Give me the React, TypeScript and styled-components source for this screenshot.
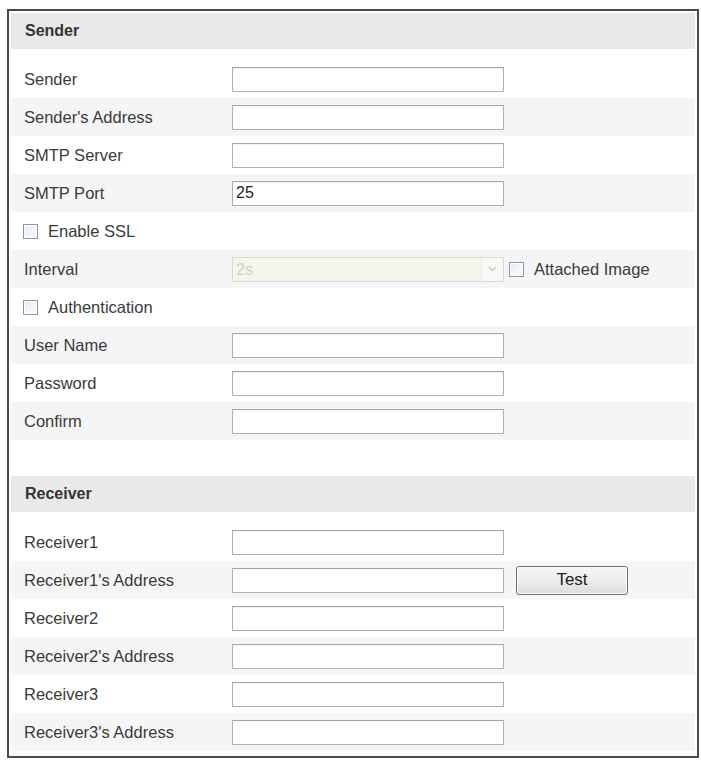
import styled, { createGlobalStyle } from "styled-components";

const Global = createGlobalStyle`
	body {
		margin: 0;
		background: #fff;
		font-family: "Liberation Sans", Arial, sans-serif;
	}
`;

const Panel = styled.div`
	box-sizing: border-box;
	width: 692px;
	margin: 9px 0 0 7px;
	padding: 2px 2px 5px;
	border: 2px solid #4a4a4a;
	background: #fff;
`;

const Section = styled.section<{ $gap?: number }>`
	margin-top: ${(p) => p.$gap ?? 0}px;
`;

const Header = styled.div`
	height: 36px;
	display: flex;
	align-items: center;
	padding-left: 14px;
	background: #e9e9e9;
	color: #333;
	font-size: 16px;
	font-weight: bold;
`;

const Rows = styled.div`
	padding-top: 11px;
`;

const Row = styled.div`
	height: 38px;
	display: grid;
	grid-template-columns: 208px auto;
	align-items: center;
	padding-left: 13px;
	&:nth-child(even) {
		background: #f5f5f5;
	}
`;

const Label = styled.span`
	color: #3a3a3a;
	font-size: 16.5px;
`;

const Controls = styled.div`
	display: flex;
	align-items: center;
`;

const TextBox = styled.input`
	box-sizing: border-box;
	width: 272px;
	height: 25px;
	margin: 0;
	padding: 0 3px;
	border: 1px solid #aab2bc;
	border-top-color: #9ea6b0;
	box-shadow: inset 0 1px 1px rgba(0, 0, 0, 0.06);
	background: #fff;
	color: #222;
	font-family: inherit;
	font-size: 16px;
	outline: none;
`;

const SelectWrap = styled.div`
	position: relative;
	box-sizing: border-box;
	width: 272px;
	height: 25px;
	border: 1px solid #d9d9cf;
	background: #f5f5ec;
`;

const Select = styled.select`
	appearance: none;
	width: 100%;
	height: 100%;
	margin: 0;
	padding: 0 3px;
	border: none;
	background: transparent;
	color: #c4c4bc;
	font-family: inherit;
	font-size: 16px;
`;

const Arrow = styled.span`
	position: absolute;
	top: 0;
	right: 0;
	width: 21px;
	height: 100%;
	display: flex;
	align-items: center;
	justify-content: center;
	background: #f8f8f6;
	border-left: 1px solid #ecece6;
	pointer-events: none;
`;

const Check = styled.span<{ $gap?: number }>`
	box-sizing: border-box;
	width: 15px;
	height: 15px;
	margin-left: ${(p) => p.$gap ?? 0}px;
	border: 1px solid #8798ad;
	background: linear-gradient(135deg, #e6eaf0, #fbfcfd);
	box-shadow: inset 0 0 0 1px #fff;
	flex-shrink: 0;
`;

const CheckRow = styled.label`
	height: 38px;
	display: flex;
	align-items: center;
	padding-left: 12px;
	&:nth-child(even) {
		background: #f5f5f5;
	}
`;

const CheckText = styled.span`
	margin-left: 10px;
	color: #3a3a3a;
	font-size: 16.5px;
`;

const Button = styled.button`
	box-sizing: border-box;
	width: 112px;
	height: 29px;
	margin-left: 12px;
	border: 1px solid #6f6f6f;
	border-radius: 3px;
	background: linear-gradient(#f7f7f7, #ececec 50%, #dcdcdc);
	box-shadow: inset 0 0 0 1px #fbfbfb;
	color: #222;
	font-family: inherit;
	font-size: 17px;
`;

function Field({ label, value = "", children }: { label: string; value?: string; children?: React.ReactNode }) {
	return (
		<Row>
			<Label>{label}</Label>
			<Controls>
				<TextBox defaultValue={value} />
				{children}
			</Controls>
		</Row>
	);
}

function CheckField({ label }: { label: string }) {
	return (
		<CheckRow>
			<Check />
			<CheckText>{label}</CheckText>
		</CheckRow>
	);
}

export default function App(): JSX.Element {
	return (
		<>
			<Global />
			<Panel>
				<Section>
					<Header>Sender</Header>
					<Rows>
						<Field label="Sender" />
						<Field label="Sender's Address" />
						<Field label="SMTP Server" />
						<Field label="SMTP Port" value="25" />
						<CheckField label="Enable SSL" />
						<Row>
							<Label>Interval</Label>
							<Controls>
								<SelectWrap>
									<Select disabled defaultValue="2s">
										<option>2s</option>
									</Select>
									<Arrow>
										<svg width="9" height="6" viewBox="0 0 9 6">
											<path d="M1 1l3.5 3.5L8 1" fill="none" stroke="#c9c9c4" strokeWidth="1.4" />
										</svg>
									</Arrow>
								</SelectWrap>
								<Check $gap={5} />
								<CheckText>Attached Image</CheckText>
							</Controls>
						</Row>
						<CheckField label="Authentication" />
						<Field label="User Name" />
						<Field label="Password" />
						<Field label="Confirm" />
					</Rows>
				</Section>
				<Section $gap={36}>
					<Header>Receiver</Header>
					<Rows>
						<Field label="Receiver1" />
						<Field label="Receiver1's Address">
							<Button>Test</Button>
						</Field>
						<Field label="Receiver2" />
						<Field label="Receiver2's Address" />
						<Field label="Receiver3" />
						<Field label="Receiver3's Address" />
					</Rows>
				</Section>
			</Panel>
		</>
	);
}
